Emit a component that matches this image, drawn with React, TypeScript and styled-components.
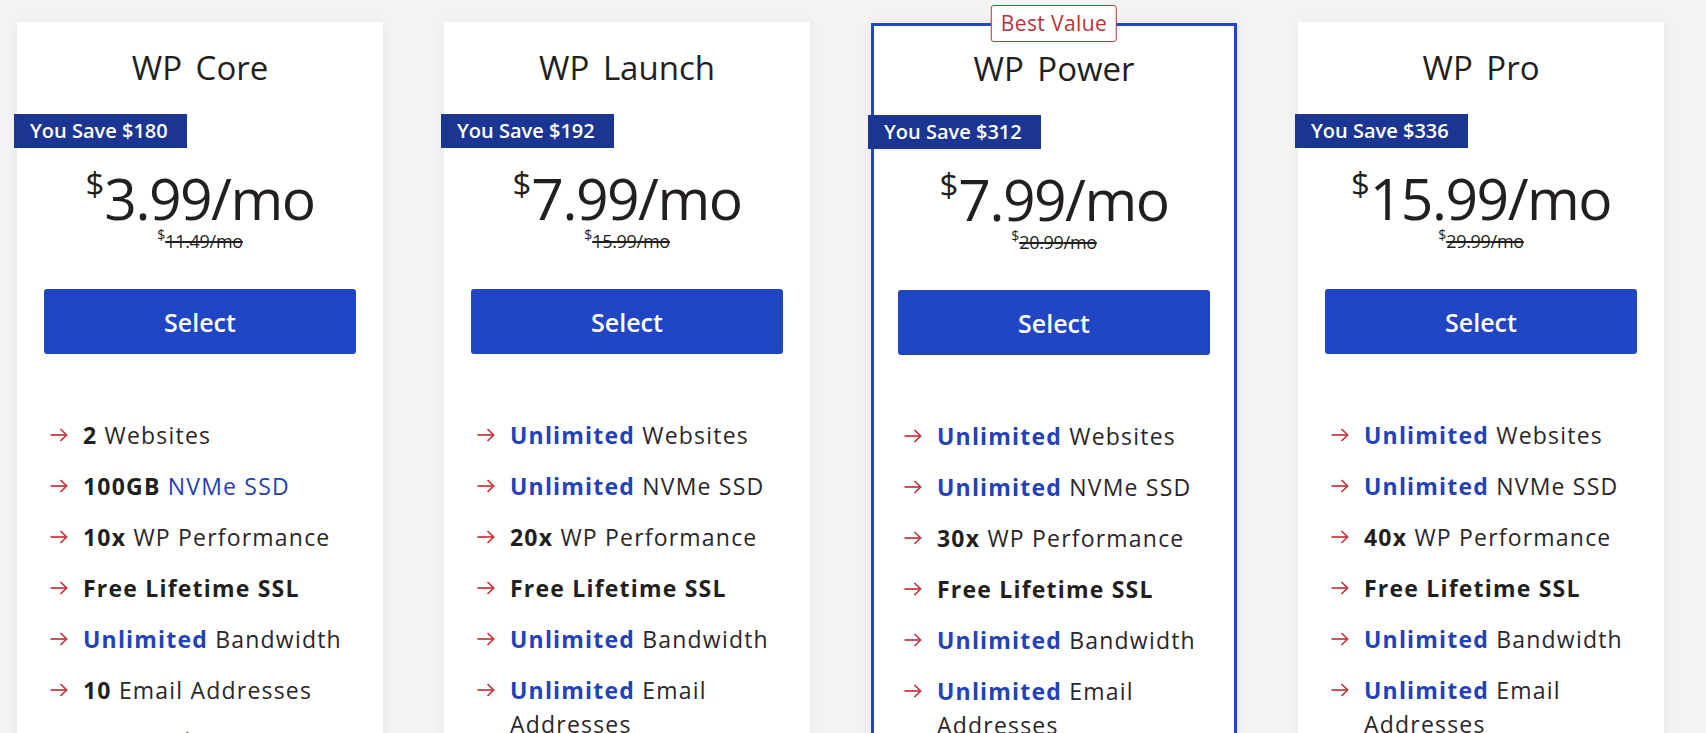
import React from "react";
import styled, { createGlobalStyle } from "styled-components";

const GlobalStyle = createGlobalStyle`
  html, body { margin: 0; padding: 0; background: #f3f3f3; }
  body { font-family: "Open Sans", "Noto Sans", sans-serif; color: #231f20; overflow: hidden; }
  * { box-sizing: border-box; }
`;

const Row = styled.div`
  display: flex;
  align-items: flex-start;
  gap: 61px;
  padding: 22px 0 0 17px;
`;

const Card = styled.div<{ $featured?: boolean }>`
  position: relative;
  width: 366px;
  flex: none;
  background: #fff;
  border: 3px solid ${(p) => (p.$featured ? "#2346c2" : "transparent")};
  margin-top: ${(p) => (p.$featured ? "1px" : "0")};
  box-shadow: 0 0 12px rgba(0, 0, 0, 0.05);
  padding: 23px 24px 40px;
  display: flex;
  flex-direction: column;
`;

const Tag = styled.div`
  position: absolute;
  top: -21px;
  left: 50%;
  transform: translateX(-50%);
  background: #fff;
  border: 1px solid #b8323b;
  border-radius: 3px;
  color: #b8323b;
  font-size: 21px;
  line-height: 35px;
  padding: 0 9px;
  white-space: nowrap;
  letter-spacing: 0.4px;
`;

const Title = styled.h2`
  margin: 0;
  text-align: center;
  font-weight: 400;
  font-size: 33px;
  line-height: 40px;
  word-spacing: 5px;
  color: #231f20;
`;

const SaveBadge = styled.div`
  align-self: flex-start;
  margin: 26px 0 0 -30px;
  width: 173px;
  height: 34px;
  background: #1b3593;
  color: #fff;
  font-size: 20px;
  font-weight: 600;
  line-height: 34px;
  padding-left: 16px;
  white-space: nowrap;
`;

const Price = styled.div`
  margin-top: 22px;
  display: flex;
  justify-content: center;
  align-items: flex-start;
  font-size: 57px;
  line-height: 56px;
  letter-spacing: -1.5px;
  font-weight: 400;
  color: #231f20;
`;

const Sup = styled.span<{ $size: number; $shift: number }>`
  font-size: ${(p) => p.$size}px;
  line-height: 1;
  letter-spacing: 0;
  margin-top: ${(p) => p.$shift}px;
`;

const OldPrice = styled.div`
  margin-top: 4px;
  display: flex;
  justify-content: center;
  align-items: flex-start;
  font-size: 18px;
  line-height: 22px;
  letter-spacing: -0.3px;
  color: #231f20;
`;

const Strike = styled.span`
  text-decoration: line-through;
  text-decoration-thickness: 1.5px;
`;

const SelectButton = styled.button`
  margin-top: 37px;
  height: 65px;
  width: 100%;
  border: none;
  border-radius: 3px;
  background: #2146c4;
  color: #fff;
  font-family: "Open Sans", "Noto Sans", sans-serif;
  font-weight: 600;
  font-size: 25px;
  cursor: pointer;
`;

const List = styled.ul`
  list-style: none;
  margin: 64px 0 0;
  padding: 0 0 0 6px;
  display: flex;
  flex-direction: column;
  gap: 17px;
`;

const Item = styled.li`
  display: flex;
  align-items: flex-start;
  gap: 15px;
  font-size: 23px;
  line-height: 34px;
  letter-spacing: 1.2px;
  color: #2b2627;
`;

const ArrowWrap = styled.span`
  flex: none;
  width: 18px;
  height: 34px;
  display: flex;
  align-items: center;
`;

const Strong = styled.b<{ $blue?: boolean }>`
  font-weight: 700;
  color: ${(p) => (p.$blue ? "#2341b8" : "#231f20")};
`;

const BlueText = styled.span`
  color: #2341b8;
`;

const Arrow = () => (
  <ArrowWrap>
    <svg width="18" height="14" viewBox="0 0 18 14" fill="none">
      <path d="M0.5 7H16.6" stroke="#c3343d" strokeWidth="1.7" />
      <path d="M10.5 1L16.6 7L10.5 13" stroke="#c3343d" strokeWidth="1.7" />
    </svg>
  </ArrowWrap>
);

type Feature = React.ReactNode;

type Plan = {
  name: string;
  save: string;
  price: string;
  old: string;
  featured?: boolean;
  features: Feature[];
};

const unlimitedFeatures = (x: string): Feature[] => [
  <>
    <Strong $blue>Unlimited</Strong> Websites
  </>,
  <>
    <Strong $blue>Unlimited</Strong> NVMe SSD
  </>,
  <>
    <Strong>{x}</Strong> WP Performance
  </>,
  <>
    <Strong>Free Lifetime SSL</Strong>
  </>,
  <>
    <Strong $blue>Unlimited</Strong> Bandwidth
  </>,
  <>
    <Strong $blue>Unlimited</Strong> Email Addresses
  </>,
  <>
    <Strong $blue>Unlimited</Strong> Databases
  </>,
];

const plans: Plan[] = [
  {
    name: "WP Core",
    save: "You Save $180",
    price: "3.99",
    old: "11.49",
    features: [
      <>
        <Strong>2</Strong> Websites
      </>,
      <>
        <Strong>100GB</Strong> <BlueText>NVMe SSD</BlueText>
      </>,
      <>
        <Strong>10x</Strong> WP Performance
      </>,
      <>
        <Strong>Free Lifetime SSL</Strong>
      </>,
      <>
        <Strong $blue>Unlimited</Strong> Bandwidth
      </>,
      <>
        <Strong>10</Strong> Email Addresses
      </>,
      <>
        <BlueText>Free Backups</BlueText>
      </>,
    ],
  },
  { name: "WP Launch", save: "You Save $192", price: "7.99", old: "15.99", features: unlimitedFeatures("20x") },
  {
    name: "WP Power",
    save: "You Save $312",
    price: "7.99",
    old: "20.99",
    featured: true,
    features: unlimitedFeatures("30x"),
  },
  { name: "WP Pro", save: "You Save $336", price: "15.99", old: "29.99", features: unlimitedFeatures("40x") },
];

export default function App() {
  return (
    <>
      <GlobalStyle />
      <Row>
        {plans.map((p) => (
          <Card key={p.name} $featured={p.featured}>
            {p.featured && <Tag>Best Value</Tag>}
            <Title>{p.name}</Title>
            <SaveBadge>{p.save}</SaveBadge>
            <Price>
              <Sup $size={33} $shift={-3}>$</Sup>
              <span>{p.price}/mo</span>
            </Price>
            <OldPrice>
              <Sup $size={14} $shift={-2}>$</Sup>
              <Strike>{p.old}/mo</Strike>
            </OldPrice>
            <SelectButton>Select</SelectButton>
            <List>
              {p.features.map((f, i) => (
                <Item key={i}>
                  <Arrow />
                  <span>{f}</span>
                </Item>
              ))}
            </List>
          </Card>
        ))}
      </Row>
    </>
  );
}
